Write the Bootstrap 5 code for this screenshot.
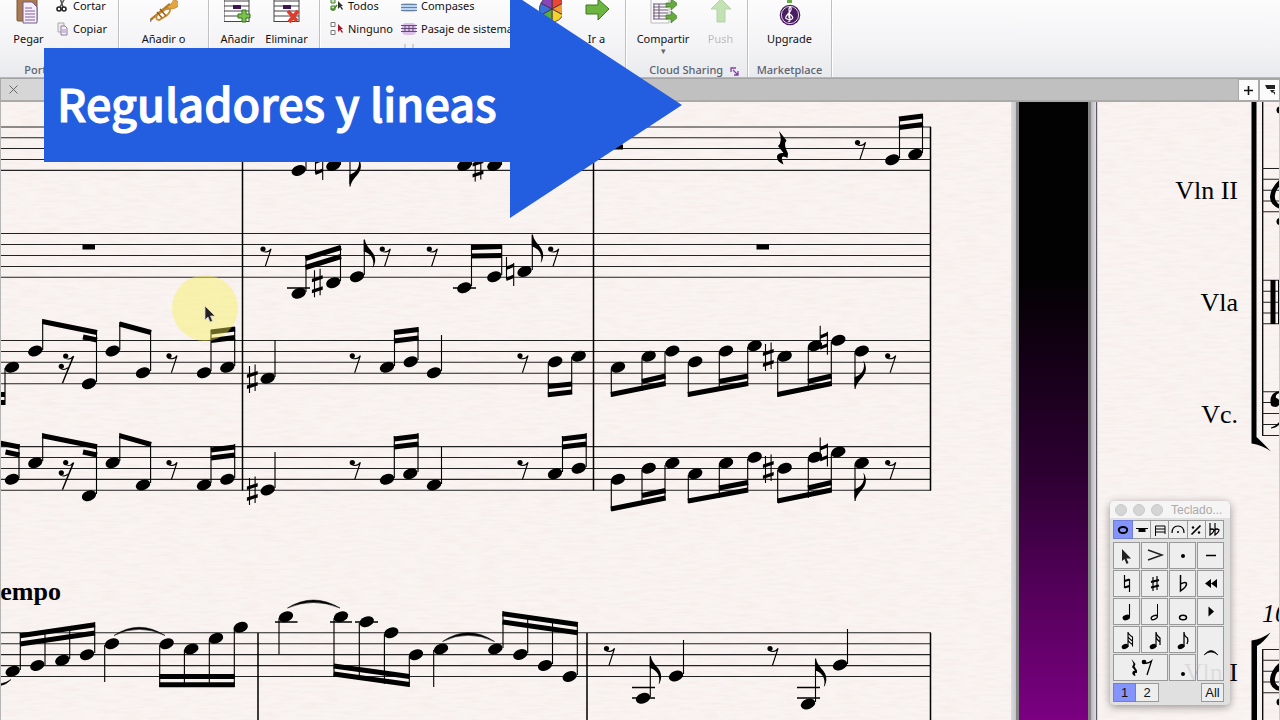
<!DOCTYPE html>
<html lang="es">
<head>
<meta charset="utf-8">
<meta name="viewport" content="width=device-width, initial-scale=1">
<title>Reguladores y lineas</title>
<link href="https://cdn.jsdelivr.net/npm/bootstrap@5.3.0/dist/css/bootstrap.min.css" rel="stylesheet">
<script src="https://cdn.jsdelivr.net/npm/bootstrap@5.3.0/dist/js/bootstrap.bundle.min.js" defer></script>
<style>
  body { font-family: "Noto Sans", "Open Sans", sans-serif; font-size: 11px; line-height: 16px; color: #111; background: #c0c0c0; }
  button { font: inherit; color: inherit; background: none; border: 0; padding: 0; }
  /* Ribbon */
  .ribbon { height: 78px; background: linear-gradient(#fcfcfd, #f3f3f5 60%, #e9eaed); border-bottom: 1px solid #b8b8bc; }
  .rgroup { height: 77px; border-right: 1px solid #bfc0c4; box-shadow: 1px 0 #fff; flex: none; overflow: hidden; position: relative; }
  .g-clip { width: 119px; } .g-instr { width: 90px; } .g-bars { width: 111px; } .g-edit { width: 306px; } .g-cloud { width: 122px; } .g-market { width: 84px; }
  .rgroup h2 { font-size: 11px; line-height: 16px; color: #5d6270; margin: 0; height: 16px; }
  .rtools { height: 62px; }
  .tool { width: 49px; height: 58px; display: flex; flex-direction: column; align-items: center; justify-content: flex-start; }
  .tool svg { height: 26px; width: 28px; margin-bottom: 5px; flex: none; }
  .tool.wide { width: 58px; }
  .mini { display: flex; align-items: center; gap: 4px; height: 23px; white-space: nowrap; }
  .mini svg { width: 16px; height: 16px; flex: none; }
  .minis { margin-top: -6px; }
  .caret { font-size: 9px; line-height: 8px; color: #666; }
  /* Document tabs */
  .tabs { height: 24px; background: #c0c0c0; border-top: 1px solid #a3a3a3; border-bottom: 2px solid #aaa; }
  .doc-tab { width: 400px; background: #d6d6d6; border: 1px solid #aaa; border-width: 0 1px 0 1px; }
  .tab-btn { width: 21px; height: 22px; background: #fbfbfb; border: 1px solid #a8a8a8; display: grid; place-items: center; }
  /* Score */
  .sheet { background: #f9f3f1; min-width: 0; }
  .sheet svg { display: block; width: 100%; height: 100%; }
  .sheet-left { flex: 1 1 0; border-left: 1px solid #b5b5b5; }
  .desk { flex: 0 0 75px; background: linear-gradient(#020202 28%, #140016 41%, #2d0032 60%, #56005c 80%, #7b0082); border: solid #858585; border-width: 0 3px; }
  .edge { flex: 0 0 5px; background: linear-gradient(90deg, #dcdbe0, #c4c4cb); }
  .edge.right { flex-basis: 7px; background: linear-gradient(90deg, #b5b5ba, #dddde2 70%, #4c4250 80%, #eee 95%); }
  .sheet-right { flex: 0 0 182px; }
  .engraved { font-family: "Liberation Serif", serif; font-size: 26px; fill: #000; }
  /* Title arrow */
  .banner { position: absolute; left: 44px; top: -8px; width: 638px; height: 226px; background: #245ee0; clip-path: polygon(0 56px, 466px 56px, 466px 0, 100% 50%, 466px 100%, 466px 170px, 0 170px); padding: 0 0 4px 13px; z-index: 3; }
  .banner h1 { margin: 0; color: #fff; font: 500 45px/60px "Noto Sans CJK JP", "Noto Sans CJK SC", sans-serif; -webkit-text-stroke: 1px #fff; white-space: nowrap; }
  .pointer { position: absolute; left: 172px; top: 275px; width: 66px; height: 66px; border-radius: 50%; background: rgba(248, 240, 80, .42); z-index: 2; padding: 12px 0 0 8px; }
  /* Keypad window */
  .keypad { position: absolute; right: 50px; top: 501px; width: 120px; background: rgba(220, 220, 220, .84); border-radius: 5px; box-shadow: 0 2px 9px rgba(0, 0, 0, .4); z-index: 2; overflow: hidden; }
  .kp-title { height: 17px; background: rgba(246, 246, 246, .95); color: #aaa; font: 12px/16px "Liberation Sans", sans-serif; gap: 6px; padding-left: 5px; }
  .kp-title i { width: 12px; height: 12px; border-radius: 50%; background: #d5d5d5; border: 1px solid #c9c9c9; }
  .kp-title span { margin-left: 2px; }
  .kp-body { padding: 2px 6px 3px 3px; }
  .kp-body button { background: rgba(250, 250, 250, .55); border: 1px solid #999; display: grid; place-items: center; font: 13px/16px "Liberation Sans", sans-serif; overflow: hidden; }
  .kp-body button.on { background: #8494fa; border-color: #6f7ed8; }
  .kp-tabs { display: grid; grid-template-columns: 20px repeat(5, 1fr); height: 19px; }
  .kp-tabs button + button { border-left: 0; }
  .kp-keys { display: grid; grid-template-columns: repeat(4, 1fr); grid-auto-rows: 27px; gap: 1px; margin: 3px 0 2px; }
  .kp-keys svg { width: 24px; height: 25px; }
  .kp-keys .rests svg { width: 50px; }
  .kp-keys .rests { grid-column: span 2; }
  .kp-keys .tie { grid-row: 4 / span 2; grid-column: 4; }
  .kp-foot button { height: 19px; width: 23px; }
</style>
</head>
<body class="vh-100 d-flex flex-column overflow-hidden position-relative">

<!-- Shared music glyphs -->
<svg width="0" height="0" class="position-absolute" aria-hidden="true">
  <defs>
    <ellipse id="nh" rx="7.4" ry="5.1" transform="rotate(-20)"/>
    <g id="r8"><circle r="2.6"/><path d="M-1 2.2Q5 3.600 7.600-.5L8.600 0 3 17H1.800L6.600 2.400Q3 4.600-1 2.600Z"/></g>
    <g id="r16"><circle r="2.6"/><circle cx="-4.4" cy="10.3" r="2.6"/><path d="M-1 2.2Q4 4 7.4-.3L8.6.2-2.5 27.3H-4L5.9 2.8Q3 4.4-1 2.6ZM-5.4 12.5Q-1 14 2 11V12.5Q-1 15-5.4 13Z"/></g>
    <g id="sh"><path d="M-2.8-12.5V14.5M2.8-14V12.5" stroke="#000" stroke-width="1.1"/><path d="M-5.4-4 5.4-7.5V-4L-5.4-.5ZM-5.4 7 5.4 3.5V7L-5.4 10.5Z"/></g>
    <g id="na"><path d="M-3.5-14.5V8M3.7-8.5V14.5" stroke="#000" stroke-width="1.1"/><path d="M-3.5-5 3.7-8V-4.5L-3.5-1.5ZM-3.5 6 3.7 3V6.5L-3.5 9.5Z"/></g>
    <path id="fl" d="M-.5 0H.6C1.5 9 12 12 10.8 22Q10 27 8.3 28.3C11 20 6 13.5-.5 12Z"/>
    <filter id="grain" x="0" y="0" width="100%" height="100%">
      <feTurbulence type="fractalNoise" baseFrequency=".05 .35" numOctaves="3" seed="4"/>
      <feColorMatrix values="0 0 0 0 .62  0 0 0 0 .5  0 0 0 0 .46  .9 0 0 0 -.36"/>
    </filter>
  </defs>
</svg>

<header class="ribbon d-flex">
  <section class="rgroup g-clip">
    <div class="rtools d-flex ps-1">
      <button class="tool"><svg viewBox="0 0 28 26"><rect x="2" y="-6" width="20" height="27" rx="1" fill="#a97a51" stroke="#7c5636"/><path d="M8 2h9l5 5v16H8z" fill="#f6effb" stroke="#725c84"/><path d="M10 8h7M10 11h10M10 14h10M10 17h10M10 20h10" stroke="#7e6199"/></svg>Pegar</button>
      <div class="minis">
        <button class="mini"><svg viewBox="0 0 16 16"><path d="M7 0l3 9M12 0L7 9" stroke="#555" stroke-width="1.5"/><circle cx="6" cy="11" r="2" fill="none" stroke="#222" stroke-width="1.6"/><circle cx="11" cy="11" r="2" fill="none" stroke="#222" stroke-width="1.6"/></svg>Cortar</button>
        <button class="mini"><svg viewBox="0 0 16 16"><path d="M5 2h6v9H5z" fill="#eee" stroke="#aaa"/><path d="M8 5h4l2 2v7H8z" fill="#f6effb" stroke="#907b9e"/><path d="M9 9h4M9 11h4" stroke="#a58fb5"/></svg>Copiar</button>
      </div>
    </div>
    <h2 class="text-center">Portapapeles</h2>
  </section>
  <section class="rgroup g-instr">
    <div class="rtools d-flex justify-content-center">
      <button class="tool wide"><svg viewBox="0 0 28 26"><path d="M-1 21L20 4" stroke="#b57a25" stroke-width="2.4"/><path d="M16 7Q23 4 24-1l6 4Q28 9 20 9Z" fill="#e4a63c" stroke="#9c6719" stroke-width=".6"/><path d="M7 15l9-6q5-1 4 2t-4 5l-7 4q-4 0-2-5z" fill="none" stroke="#c98b2f" stroke-width="1.8"/><path d="M10 9l6 7M7 12l5 6" stroke="#8f5d17" stroke-width="1.3"/><circle cx="0" cy="20.500" r="1.500" fill="#888"/></svg>Añadir&nbsp;o</button>
    </div>
  </section>
  <section class="rgroup g-bars">
    <div class="rtools d-flex ps-1">
      <button class="tool"><svg viewBox="0 0 28 26"><path d="M0 0h25v22H0z" fill="#fff"/><path d="M0 1h25M0 6h25M0 11h25M0 16h25M0 21.500h25M0 0v22M25 0v22" stroke="#444" fill="none"/><path d="M9 5h8v4H9z" fill="#3e1555"/><path d="M18 10h4v4h4v4h-4v4h-4v-4h-4v-4h4z" fill="#7cc04f" stroke="#2e7417"/></svg>Añadir</button>
      <button class="tool"><svg viewBox="0 0 28 26"><path d="M1 0h25v22H1z" fill="#fff"/><path d="M1 1h25M1 6h25M1 11h25M1 16h25M1 21.500h25M1 0v22M26 0v22" stroke="#444" fill="none"/><path d="M10 5h8v4h-8z" fill="#3e1555"/><path d="M15 11l9 10M25 11l-9 11" stroke="#dd3b2c" stroke-width="3.8"/></svg>Eliminar</button>
    </div>
  </section>
  <section class="rgroup g-edit">
    <div class="rtools d-flex">
      <div class="minis ps-2">
        <button class="mini"><svg viewBox="0 0 16 16"><path d="M3 1h4v4H3zM3 8h4v4H3z" fill="#cfe6c4" stroke="#477f32"/><path d="M3 10l2 2 4-5" stroke="#3f8a25" fill="none" stroke-width="1.5"/><path d="M10 3v8l2-2 2 3 1-1-2-3h2z" fill="#333"/></svg>Todos</button>
        <button class="mini"><svg viewBox="0 0 16 16"><path d="M3 1.500h4v4H3zM3 9.500h4v4H3z" fill="#fff" stroke="#777"/><path d="M10 3v8l2-2 2 3 1-1-2-3h2z" fill="#a5182e"/></svg>Ninguno</button>
      </div>
      <div class="minis ps-2">
        <button class="mini"><svg viewBox="0 0 16 16"><rect y="5" width="16" height="9" rx="4" fill="#bcd4f4"/><path d="M0 6.500h16M0 9.500h16M0 12.500h16" stroke="#6680a0"/></svg>Compases</button>
        <button class="mini"><svg viewBox="0 0 16 16"><rect x="1" y="2" width="14" height="12" rx="4" fill="#dcc0ea"/><path d="M0 4.500h16M0 7.500h16M0 10.500h16M4 4v7M8 4v7M12 4v7" stroke="#644b76"/></svg>Pasaje de sistema</button>
        <button class="mini"><svg viewBox="0 0 16 16"><path d="M4 0v7M12 0v7" stroke="#aaa"/></svg>Más</button>
      </div>
    </div>
    <!-- the wheel and arrow stay at the end of the group -->
    <div class="position-absolute top-0 end-0 d-flex pe-1">
      <button class="tool" aria-label="Color"><svg viewBox="0 0 28 26"><g stroke="#3c2b46" stroke-width=".8"><path d="M18 9V-4A13 13 0 0 1 29 3Z" fill="#ea4630"/><path d="M18 9L29 3A13 13 0 0 1 29 15Z" fill="#f29a2e"/><path d="M18 9L29 15A13 13 0 0 1 18 22Z" fill="#f3d327"/><path d="M18 9V22A13 13 0 0 1 7 15Z" fill="#58ad3b"/><path d="M18 9L7 15A13 13 0 0 1 7 3Z" fill="#3a71d8"/><path d="M18 9L7 3A13 13 0 0 1 18-4Z" fill="#8b45b8"/></g></svg></button>
      <button class="tool"><svg viewBox="0 0 28 26"><path d="M3 5h12V-1l11 10-11 11v-6H3z" fill="#6cb541" stroke="#3c7920"/></svg>Ir a</button>
    </div>
  </section>
  <section class="rgroup g-cloud">
    <div class="rtools d-flex ps-2">
      <button class="tool wide ms-0"><svg viewBox="0 0 28 26"><path d="M2-4h18v27H2z" fill="#fafafa" stroke="#bbb"/><path d="M4 4h15M4 7h15M4 10h15M4 13h15M4 16h15M4 19h15M5 4v15M10 4v15" stroke="#6c5a78"/><path d="M17 3h5V-1l7 5-7 6V7h-5zM17 15h5v-4l7 6-7 6v-4h-5z" fill="#68a941" stroke="#3c7920" stroke-width=".7"/></svg>Compartir<span class="caret">&#9662;</span></button>
      <button class="tool text-black-50 opacity-50 ms-1"><svg viewBox="0 0 28 26"><path d="M10 22V9H4L14-1l10 10h-6v13z" fill="#8ecb6d" stroke="#74a85a"/></svg>Push</button>
    </div>
    <h2 class="text-end pe-2">Cloud Sharing <svg class="ms-1" width="9" height="9" viewBox="0 0 9 9"><path d="M1 5V1h5M3 3l5 5M8 4v4H4" fill="none" stroke="#8240a0" stroke-width="1.3"/></svg></h2>
  </section>
  <section class="rgroup g-market">
    <div class="rtools d-flex justify-content-center">
      <button class="tool"><svg viewBox="0 0 28 26"><path d="M11-3h5v6h-5z" fill="#65ad41"/><circle cx="14" cy="15" r="10.300" fill="#4a1c62"/><circle cx="14" cy="15" r="8.600" fill="none" stroke="#fff" stroke-width=".8"/><path d="M12 21q2 1 2-1l-1-11q1-3 2-1t-3 6-1 5 5 0-1-4-2 3" fill="none" stroke="#fff" stroke-width="1.200"/></svg>Upgrade</button>
    </div>
    <h2 class="text-center">Marketplace</h2>
  </section>
</header>

<nav class="tabs d-flex justify-content-between flex-shrink-0">
  <div class="doc-tab d-flex align-items-center ps-1"><button class="px-1 ms-0" aria-label="Cerrar"><svg class="d-block" width="9" height="9"><path d="M.5.500l8 8M8.500.500l-8 8" stroke="#666"/></svg></button></div>
  <div class="d-flex">
    <button class="tab-btn" aria-label="Nueva"><svg width="11" height="11"><path d="M5.500 1v9M1 5.500h9" stroke="#111" stroke-width="1.600"/></svg></button>
    <button class="tab-btn" aria-label="Lista"><svg width="12" height="12"><path d="M1 1h10v4H3zM6 6h5l-3 3zM9 8h2v3z" fill="#222"/></svg></button>
  </div>
</nav>

<main class="d-flex flex-grow-1" style="min-height:0">
  <div class="sheet sheet-left">
    <svg viewBox="1 102 1010 618" preserveAspectRatio="xMinYMin slice" role="img" aria-label="Partitura">
      <rect x="0" y="102" width="1014" height="640" filter="url(#grain)" opacity=".24"/>
      <!-- staves and barlines -->
      <path stroke="#222" stroke-width="1.100" d="M0 127H931M0 137.700H931M0 148.500H931M0 159.500H931M0 170.400H931
        M0 233.500H931M0 244.500H931M0 255.500H931M0 266.500H931M0 277.300H931
        M0 340.500H931M0 351.500H931M0 362.300H931M0 373.200H931M0 383.700H931
        M0 446.600H931M0 457.500H931M0 468.500H931M0 479.400H931M0 490.300H931
        M0 632.800H931M0 643.700H931M0 654.600H931M0 665.600H931M0 676.500H931"/>
      <path stroke="#000" stroke-width="1.500" d="M242.500 127V490.500M593.500 127V490.500M930.500 127V490.500M258 633V740M587 633V740M930.500 633V740"/>
      <!-- ledger lines -->
      <path stroke="#000" stroke-width="1.400" d="M287 288H310M453 288H476M275 622H297.500M330 622H352M355 622H378M632 687.500H655M632 698H655M797 687.500H820M797 698H820"/>
      <!-- stems -->
      <path stroke="#000" stroke-width="1.100" d="M306 150V170M340.500 150V165M350 150V184M471.500 150V165M501.500 150V165M899.500 117V158M922.500 114V153
        M306 256V292M340.500 246V281M364.300 240V275M471.500 246V286M501.700 245V275M532.300 235V270
        M5 368V405M42.700 319V350M96.500 330V382M119.800 322V350M150.600 330V371M211 330V371M234.700 327V366M275 340.500V377M394.500 330V366M418 327V360M441.500 335V371M548.300 363V397M571.700 357V394
        M611.300 369V397M642 358V391M665 352V386M688.300 363V397M719.300 353V391M747.700 347V386M777.700 358V397M808.300 347V391M831.300 342V386M855 353V386
        M19 444V478M42.700 433V461M96.500 444V494M119.800 433V461M150.600 442V483M211 447V483M234.700 444V478M275 452V488M394.300 436V478M418 433V472M441.500 447V484M562.500 436V472M586.200 433V467
        M611.300 481V511M642 470V505M665 465V500M688.300 475V503M719.300 465V498M747.700 459V492M777.700 470V503M808.300 459V498M831.300 454V492M855 465V498
        M20.300 633V670M45 630V665M69.700 626V659M94.700 622V653M104.700 645V682M159.700 645V687M184.400 650V687M209.300 640V687M234.300 629V687
        M279 618V654M334 618V677M359.300 623V680M384.400 634V684M409.300 656V687M433.700 650V687M503 611V648M527.700 615V653M552.500 619V664M577.300 622V675
        M650.300 657V697M683.500 640V674M815.500 659V702M847.500 629V664"/>
      <!-- beams -->
      <path stroke="#000" stroke-width="5" d="M899 119 923 116M899 127.500 923 124.500M305.500 258.500 341 247.500M305.500 267.500 341 256.500M471 247.500 502 246.500M471 256 502 255.500
        M0 394.500H5M0 402.500H5M42.300 321.500 97 332.500M83 337 97 340M119.500 324 151 332.500M211 332 235 329M211 340.500 235 337.500M394 332.500 418.500 329.500M394 341 418.500 338M548 386.500 572 384M548 394.700 572 392
        M611 394.500 665.500 383.500M642 381.500 665.500 376M688 394.500 748 383.500M719 381.500 748 376M777.500 394.500 831.500 383.500M808 381.500 831.500 376
        M0 443 19.500 447M5.500 452 19.500 455M42.300 435.700 97 446.700M83 452 97 455M119.500 435.700 151 444.500M211 450 235 447M211 458 235 455M394 439 418.500 436M394 447 418.500 444M562 439 586.500 436M562 447 586.500 444
        M611 509 665.500 498M642 495.500 665.500 490.500M688 501 748 490M719 488 748 482.500M777.500 501 831.500 490M808 488 831.500 482.500
        M20 635.700 95 624.700M20 644 95 633M159.300 676.500H234.700M159.300 684.700H234.700M333.700 666 409.500 676.500M333.700 674 409.500 684.500M502.500 613.700 577.800 624.500M502.500 622 577.800 632.700"/>
      <!-- slurs -->
      <path d="M114 635.500Q139 619 165 635.500Q139 623 114 635.500ZM287.500 608Q313 592 340 608Q313 597 287.500 608ZM442.500 641.500Q468 624 494.500 641.500Q468 629 442.500 641.500ZM0 684Q6 683 11 679.500Q6 685 0 685.500Z" stroke="#000" stroke-width=".5"/>
      <!-- bar rests -->
      <path d="M82.500 244.500h12.500v5H82.500zM756.500 244.500H769v5h-12.500zM610 144.500h13v5h-13z"/>
      <!-- quarter rest -->
      <path d="M779 131 786.500 140.500Q783 144 788 153.500L787.500 158Q781 154 782 160L783.500 164.500Q776 161 777 156Q778.500 152.500 783.500 153L778 146Q783 142 779 131Z"/>
      <!-- noteheads -->
      <use href="#nh" x="298.700" y="170.500"/><use href="#nh" x="333.300" y="165.500"/><use href="#nh" x="464.300" y="165.500"/><use href="#nh" x="494.300" y="165.500"/><use href="#nh" x="892.300" y="159.700"/><use href="#nh" x="915.300" y="154.300"/>
      <use href="#nh" x="298.700" y="293.300"/><use href="#nh" x="333.300" y="282.700"/><use href="#nh" x="357" y="276.700"/><use href="#nh" x="464.300" y="287.700"/><use href="#nh" x="494.300" y="276.700"/><use href="#nh" x="524.500" y="271.500"/>
      <use href="#nh" x="12" y="367.300"/><use href="#nh" x="35.300" y="351"/><use href="#nh" x="89" y="383.700"/><use href="#nh" x="112.700" y="351"/><use href="#nh" x="143" y="372.700"/><use href="#nh" x="204" y="372.700"/><use href="#nh" x="227.300" y="367.300"/><use href="#nh" x="267.700" y="378.300"/><use href="#nh" x="387" y="367.300"/><use href="#nh" x="410.700" y="361.700"/><use href="#nh" x="434" y="372.700"/><use href="#nh" x="555.300" y="361.700"/><use href="#nh" x="578.700" y="356.300"/>
      <use href="#nh" x="618" y="367.300"/><use href="#nh" x="648.700" y="356.300"/><use href="#nh" x="672.300" y="351"/><use href="#nh" x="695.300" y="361.700"/><use href="#nh" x="726" y="351"/><use href="#nh" x="754.700" y="345.700"/><use href="#nh" x="784.700" y="356.300"/><use href="#nh" x="815" y="345.700"/><use href="#nh" x="838.300" y="340.300"/><use href="#nh" x="861.700" y="351"/>
      <use href="#nh" x="12" y="479.300"/><use href="#nh" x="35.300" y="462.700"/><use href="#nh" x="89" y="495.700"/><use href="#nh" x="112.700" y="462.700"/><use href="#nh" x="143" y="485"/><use href="#nh" x="204" y="485"/><use href="#nh" x="227.300" y="479.300"/><use href="#nh" x="267.700" y="490"/><use href="#nh" x="387" y="479.300"/><use href="#nh" x="410.300" y="473.700"/><use href="#nh" x="434" y="485"/><use href="#nh" x="555" y="473.700"/><use href="#nh" x="578.700" y="468.300"/>
      <use href="#nh" x="618" y="479.300"/><use href="#nh" x="648.700" y="468.300"/><use href="#nh" x="672.300" y="463"/><use href="#nh" x="695.300" y="473.700"/><use href="#nh" x="726" y="463"/><use href="#nh" x="754.700" y="457.300"/><use href="#nh" x="784.700" y="468.300"/><use href="#nh" x="815" y="457.300"/><use href="#nh" x="838.300" y="452"/><use href="#nh" x="861.700" y="463"/>
      <use href="#nh" x="12.700" y="671.300"/><use href="#nh" x="37.300" y="665.500"/><use href="#nh" x="62.300" y="660.300"/><use href="#nh" x="87" y="654.700"/><use href="#nh" x="112" y="643.700"/><use href="#nh" x="166.700" y="643.700"/><use href="#nh" x="191.300" y="649"/><use href="#nh" x="216" y="638.300"/><use href="#nh" x="240.700" y="627.300"/><use href="#nh" x="286" y="616.700"/><use href="#nh" x="341" y="616.700"/><use href="#nh" x="366.700" y="621.700"/><use href="#nh" x="391.300" y="632.700"/><use href="#nh" x="416" y="654.700"/><use href="#nh" x="441" y="649"/><use href="#nh" x="495.300" y="649"/><use href="#nh" x="520.300" y="654.500"/><use href="#nh" x="545" y="665.500"/><use href="#nh" x="569.700" y="676.500"/><use href="#nh" x="643" y="698.300"/><use href="#nh" x="676" y="676"/><use href="#nh" x="808" y="704"/><use href="#nh" x="840" y="665"/>
      <!-- rests -->
      <use href="#r8" x="857.500" y="142.500"/><use href="#r8" x="263" y="249"/><use href="#r8" x="382.300" y="249"/><use href="#r8" x="429.300" y="249"/><use href="#r8" x="550.700" y="249"/>
      <use href="#r16" x="65.700" y="356"/><use href="#r8" x="169" y="355.800"/><use href="#r8" x="352.300" y="355.800"/><use href="#r8" x="520" y="355.800"/><use href="#r8" x="887.700" y="355.800"/>
      <use href="#r16" x="65.700" y="462.500"/><use href="#r8" x="169" y="462.500"/><use href="#r8" x="352.300" y="462.500"/><use href="#r8" x="520" y="462.500"/><use href="#r8" x="887.700" y="462.500"/>
      <use href="#r8" x="606.500" y="648.500"/><use href="#r8" x="770" y="648.500"/>
      <!-- accidentals -->
      <use href="#na" x="319" y="165.500"/><use href="#sh" x="478" y="167"/><use href="#sh" x="317.300" y="282.700"/><use href="#na" x="510" y="271.500"/><use href="#sh" x="252.300" y="378.500"/><use href="#sh" x="768.300" y="356.500"/><use href="#na" x="823.700" y="340.300"/><use href="#sh" x="252.300" y="490.500"/><use href="#sh" x="768.300" y="468.500"/><use href="#na" x="823.700" y="452"/>
      <!-- flags -->
      <use href="#fl" x="364.300" y="239.500"/><use href="#fl" x="532.300" y="234.500"/><use href="#fl" x="650.300" y="656"/><use href="#fl" x="815.500" y="658.500"/>
      <use href="#fl" transform="translate(350 186.500) scale(1 -1)"/><use href="#fl" transform="translate(855 389) scale(1 -1)"/><use href="#fl" transform="translate(855 501) scale(1 -1)"/>
      <text class="engraved" x="61" y="600" text-anchor="end" font-weight="bold">empo</text>
    </svg>
  </div>
  <div class="edge"></div>
  <div class="desk"></div>
  <div class="edge right"></div>
  <div class="sheet sheet-right">
    <svg viewBox="1098 102 182 618" preserveAspectRatio="xMaxYMin slice" role="img" aria-label="Página siguiente">
      <rect x="1098" y="102" width="184" height="640" filter="url(#grain)" opacity=".24"/>
      <path d="M1251.500 102h5V437Q1262 442 1271 451.500Q1262 445 1251.500 443.500ZM1251.500 740V640.500Q1262 639 1270.500 632.500Q1264 642 1257 646V740Z"/>
      <path stroke="#000" stroke-width="1.300" d="M1262.700 102V435.500M1262.700 649V740"/>
      <path stroke="#222" stroke-width="1.100" d="M1262 168.500H1279M1262 179.300H1279M1262 190.200H1279M1262 201H1279M1262 211.700H1279M1262 280.300H1279M1262 291.200H1279M1262 302.200H1279M1262 313H1279M1262 323.800H1279M1262 391.700H1279M1262 402.500H1279M1262 413.500H1279M1262 424.500H1279M1262 435.500H1279M1262 649.500H1279M1262 660.300H1279M1262 671.300H1279M1262 682H1279M1262 692.800H1279"/>
      <path d="M1280 179Q1270 189 1270 197T1280 209V205Q1274 201 1275 195T1280 186ZM1270.500 280h5v44h-5zM1278 280h1.500v44h-1.500zM1280 662Q1270 671 1270 680T1280 691V687Q1274 684 1275 678T1280 670ZM1280 391Q1270 392 1270.500 402A4.500 4.500 0 1 0 1276 398Q1275 394 1280 393ZM1271 427.500Q1276 426 1280 421V424Q1276 428 1271 428.500Z"/>
      <circle cx="1280" cy="110" r="3.500"/><circle cx="1280" cy="221.500" r="3.500"/><circle cx="1280" cy="702" r="3.500"/>
      <g class="engraved" text-anchor="end">
        <text x="1238" y="199">Vln II</text><text x="1238" y="311">Vla</text><text x="1238" y="423">Vc.</text><text x="1238" y="681">Vln I</text>
      </g>
      <text class="engraved" x="1262" y="622" font-style="italic">10</text>
      <path d="M1279.500 102v638" stroke="#ccc"/>
    </svg>
  </div>
</main>

<div class="pointer d-grid"><svg class="m-auto overflow-visible" width="10" height="16" viewBox="0 0 10 16"><path d="M1 0v14l3-3 2 5 2.500-1-2-5h4.500z" fill="#222" stroke="#d8d0d8" stroke-width=".8"/></svg></div>

<div class="banner d-flex align-items-center"><h1>Reguladores y lineas</h1></div>

<aside class="keypad">
  <div class="kp-title d-flex align-items-center"><i></i><i></i><i></i><span>Teclado...</span></div>
  <div class="kp-body">
    <div class="kp-tabs">
      <button class="on" aria-label="Notas"><svg width="12" height="10"><ellipse cx="6" cy="5" rx="4.200" ry="3" fill="none" stroke="#000" stroke-width="2"/></svg></button>
      <button aria-label="Silencios"><svg width="12" height="10"><path d="M0 3.500h12" stroke="#000"/><path d="M2.500 3.500h7v3.500h-7z"/></svg></button>
      <button aria-label="Barras"><svg width="12" height="12"><path d="M1.500 12V2H11v8M1.500 5H11M1.500 8H11" fill="none" stroke="#000"/></svg></button>
      <button aria-label="Calderón"><svg width="14" height="12"><path d="M1 9Q1 2 7 2t6 7" fill="none" stroke="#000" stroke-width="1.200"/><circle cx="7" cy="8" r="1"/></svg></button>
      <button aria-label="Repetición"><svg width="12" height="12"><path d="M1.500 10.500l9-9" stroke="#000" stroke-width="1.700"/><circle cx="3" cy="3.500" r="1.200"/><circle cx="9" cy="8.500" r="1.200"/></svg></button>
      <button aria-label="Doble bemol"><svg width="12" height="14"><path d="M2 0v12q4-3 4-5-2-2-4 0M7 0v12q4-3 4-5-2-2-4 0" fill="none" stroke="#000" stroke-width="1.200"/></svg></button>
    </div>
    <div class="kp-keys">
      <button aria-label="Cursor"><svg viewBox="0 0 24 25"><path d="M7 6v12l2.500-2 2 5 2-1-2-4.500H16z" fill="#222"/></svg></button>
      <button aria-label="Acento"><svg viewBox="0 0 24 25"><path d="M5 7l14 5-14 5" fill="none" stroke="#222" stroke-width="1.500"/></svg></button>
      <button aria-label="Staccato"><svg viewBox="0 0 24 25"><circle cx="12" cy="13" r="2"/></svg></button>
      <button aria-label="Tenuto"><svg viewBox="0 0 24 25"><path d="M7 12.500h10" stroke="#000" stroke-width="1.400"/></svg></button>
      <button aria-label="Becuadro"><svg viewBox="0 0 24 25"><path d="M9.500 4v13M14.500 8v13" stroke="#000" stroke-width="1.200"/><path d="M9.500 10l5-1.500M9.500 16.500l5-1.500" stroke="#000" stroke-width="2"/></svg></button>
      <button aria-label="Sostenido"><svg viewBox="0 0 24 25"><path d="M10 6v14M14 5v14" stroke="#000" stroke-width="1.200"/><path d="M8 11l8-2M8 16.500l8-2" stroke="#000" stroke-width="2.300"/></svg></button>
      <button aria-label="Bemol"><svg viewBox="0 0 24 25"><path d="M9.500 4v16q6-4 6-7 0-3-6 0" fill="none" stroke="#000" stroke-width="1.500"/></svg></button>
      <button aria-label="Anterior"><svg viewBox="0 0 24 25"><path d="M12 8v9l-6-4.500zM18 8v9l-6-4.500z"/></svg></button>
      <button aria-label="Negra"><svg viewBox="0 0 24 25"><path d="M14.500 5v13" stroke="#000" stroke-width="1.100"/><ellipse cx="11.300" cy="18.500" rx="3.800" ry="2.600" transform="rotate(-20 11.300 18.500)"/></svg></button>
      <button aria-label="Blanca"><svg viewBox="0 0 24 25"><path d="M14.500 5v13" stroke="#000"/><ellipse cx="11.300" cy="18.500" rx="3.300" ry="1.800" transform="rotate(-25 11.300 18.500)" fill="none" stroke="#000" stroke-width="1.300"/></svg></button>
      <button aria-label="Redonda"><svg viewBox="0 0 24 25"><ellipse cx="12" cy="18.500" rx="3.500" ry="2.300" fill="none" stroke="#000" stroke-width="1.500"/></svg></button>
      <button aria-label="Reproducir"><svg viewBox="0 0 24 25"><path d="M9.500 7.500v10l5.500-5z"/></svg></button>
      <button aria-label="Fusa"><svg viewBox="0 0 24 25"><path d="M13 20V5q0 2 4.500 5v3.500M13 9q0 2 4.500 5v3M13 12.500q0 2 4.500 5v2" fill="none" stroke="#000" stroke-width="1.100"/><ellipse cx="10" cy="19.500" rx="3.400" ry="2.500" transform="rotate(-20 10 19.500)"/></svg></button>
      <button aria-label="Semicorchea"><svg viewBox="0 0 24 25"><path d="M13 20V5q0 3 4 6v4M13 9q0 3 4 6v3" fill="none" stroke="#000" stroke-width="1.200"/><ellipse cx="10" cy="19.500" rx="3.400" ry="2.500" transform="rotate(-20 10 19.500)"/></svg></button>
      <button aria-label="Corchea"><svg viewBox="0 0 24 25"><path d="M13 20V5q0 4 3.500 6 1 3-.5 6" fill="none" stroke="#000" stroke-width="1.300"/><ellipse cx="10" cy="19.500" rx="3.400" ry="2.500" transform="rotate(-20 10 19.500)"/></svg></button>
      <button class="tie" aria-label="Ligadura"><svg viewBox="0 0 24 25"><path d="M5 14Q12 5 19 14Q12 8 5 14Z" stroke="#000" stroke-width=".6"/></svg></button>
      <button class="rests" aria-label="Silencio"><svg viewBox="0 0 50 25"><path d="M15.500 4l4 5-1 2.500 2.500 4v2.500q-3-1-1.500 3-4-1-3-4 .500-1.500 2.500-1.500L16 12l1.500-3z"/><path d="M28 8q4 1 7.500-2L31 20" fill="none" stroke="#000" stroke-width="1.300"/><circle cx="28" cy="7" r="2.300"/></svg></button>
      <button aria-label="Puntillo"><svg viewBox="0 0 24 25"><circle cx="12" cy="19" r="2"/></svg></button>
    </div>
    <div class="kp-foot d-flex"><button class="on">1</button><button class="border-start-0">2</button><button class="ms-auto">All</button></div>
  </div>
</aside>
</body>
</html>
